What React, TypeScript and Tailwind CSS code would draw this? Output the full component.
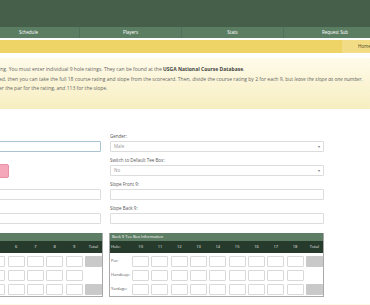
import React from "react";

const font = { fontFamily: '"Open Sans", "Liberation Sans", sans-serif' };

function NavItem({ label, last }: { label: string; last?: boolean }) {
  return (
    <div
      className={`w-[102px] shrink-0 flex items-center justify-center text-white text-[4.5px] ${
        last ? "" : "border-r border-[#50725a]"
      }`}
    >
      {label}
    </div>
  );
}

function Field({ label, select, value }: { label: string; select?: boolean; value?: string }) {
  return (
    <div className="flex flex-col mb-[5px]">
      <div className="h-[6px] leading-[6px] text-[4.5px] text-[#555] mb-[2px]">{label}</div>
      <div className="h-[11px] border border-[#dcdcdc] rounded-[1px] bg-white flex items-center justify-between px-[3px] text-[4.5px] text-[#999]">
        <span>{value}</span>
        {select && <span className="text-[4px] text-[#777]">▾</span>}
      </div>
    </div>
  );
}

function TeeTable({ title, start, showTitle }: { title: string; start: number; showTitle: boolean }) {
  const holes = Array.from({ length: 9 }, (_, i) => start + i);
  const rows = ["Par:", "Handicap:", "Yardage:"];
  return (
    <div className="w-[215px] shrink-0 border-x border-b border-[#a9a9a9] bg-white">
      <div className="h-[8px] bg-[#5d7d64] text-white text-[4px] leading-[8px] px-[2px]">
        {showTitle ? title : ""}
      </div>
      <div className="h-[12px] bg-[#263b2c] flex items-center text-[#e8e8e8] text-[4px]">
        <div className="w-[21px] shrink-0 pl-[1px]">Hole:</div>
        {holes.map((h) => (
          <div key={h} className="w-[19.3px] shrink-0 text-center">
            {h}
          </div>
        ))}
        <div className="w-[19.3px] shrink-0 text-center">Total</div>
      </div>
      <div className="flex flex-col gap-[2px] pt-[2px] pb-[1px]">
        {rows.map((r, ri) => (
          <div key={r} className="h-[12px] flex items-center text-[4px] text-[#555]">
            <div className="w-[21px] shrink-0 pl-[1px]">{r}</div>
            {holes.map((h) => (
              <div key={h} className="w-[19.3px] shrink-0 flex justify-center">
                <div className="w-[17px] h-[11px] border border-[#d9d9d9] rounded-[1px] bg-white" />
              </div>
            ))}
            <div className="w-[19.3px] shrink-0 flex justify-center">
              {ri !== 1 ? (
                <div className="w-[17px] h-[11px] rounded-[1px] bg-[#c9c9c9]" />
              ) : (
                <div className="w-[17px] h-[11px]" />
              )}
            </div>
          </div>
        ))}
      </div>
    </div>
  );
}

export default function App() {
  return (
    <div className="w-[370px] h-[305px] overflow-hidden bg-white relative" style={font}>
      {/* header */}
      <div className="h-[27px] bg-[#455f4b]" />
      <div className="h-[11px] bg-[#5b7e63] flex ml-[-22px]">
        <NavItem label="Schedule" />
        <NavItem label="Players" />
        <NavItem label="Stats" />
        <NavItem label="Request Sub" last />
      </div>
      <div className="h-[2px] bg-white" />
      <div className="h-[13px] bg-[#eed466] flex justify-end">
        <div className="w-[28px] bg-[#f2dc85] flex items-center pl-[16px] text-[4.5px] text-[#4a4a2a] whitespace-nowrap">
          Home /
        </div>
      </div>

      {/* info box */}
      <div className="mt-[5px] h-[51px] bg-gradient-to-b from-[#fefbea] to-[#f7eec0] pt-[7px] text-[5px] leading-[9.6px] text-[#666] whitespace-nowrap ml-[-1px]">
        <div>
          ing. You must enter individual 9 hole ratings. They can be found at the{" "}
          <span className="font-bold text-[#444]">USGA National Course Database</span>.
        </div>
        <div>
          ed, then you can take the full 18 course rating and slope from the scorecard. Then, divide the course
          rating by 2 for each 9, but <em>leave the slope as one number</em>.
        </div>
        <div>er the par for the rating, and 113 for the slope.</div>
      </div>

      {/* form */}
      <div className="flex gap-[9px] ml-[-113px] mt-[24px]">
        <div className="w-[214px] shrink-0 flex flex-col">
          <div className="h-[8px]" />
          <div className="h-[11px] border border-[#a8c4d3] rounded-[1px] bg-white mb-[12px]" />
          <div className="flex justify-end pr-[92px] mb-[11px]">
            <div className="w-[30px] h-[14px] bg-[#f4a8b9] border border-[#e691a6] rounded-[2px]" />
          </div>
          <div className="h-[11px] border border-[#dcdcdc] rounded-[1px] bg-white mb-[13px]" />
          <div className="h-[11px] border border-[#dcdcdc] rounded-[1px] bg-white" />
        </div>
        <div className="w-[214px] shrink-0 flex flex-col">
          <Field label="Gender:" select value="Male" />
          <Field label="Switch to Default Tee Box:" select value="No" />
          <Field label="Slope Front 9:" />
          <Field label="Slope Back 9:" />
        </div>
      </div>

      {/* tables */}
      <div className="flex gap-[6px] ml-[-112px] mt-[4px]">
        <TeeTable title="Front 9 Tee Box Information" start={1} showTitle />
        <TeeTable title="Back 9 Tee Box Information" start={10} showTitle />
      </div>
      <div className="mt-[7px] h-[10px] bg-[#fdf9e6]" />
    </div>
  );
}
